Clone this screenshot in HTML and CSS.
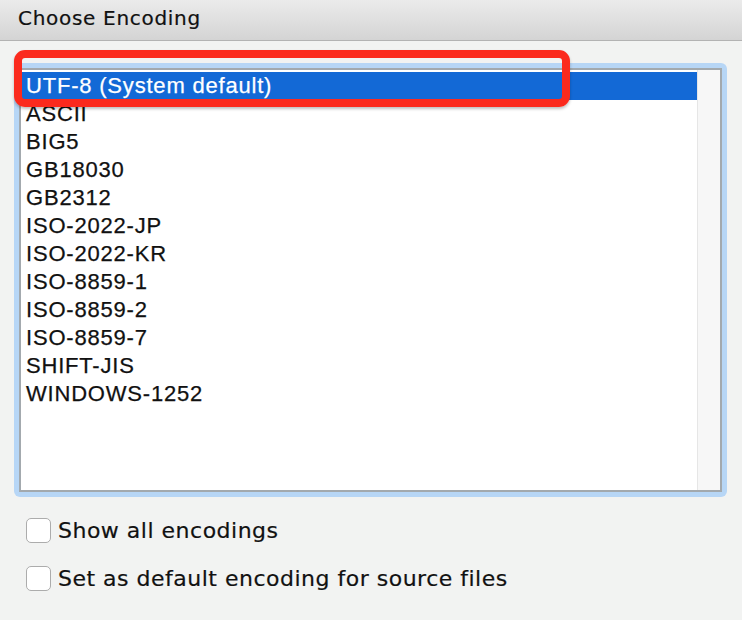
FILE: index.html
```html
<!DOCTYPE html>
<html>
<head>
<meta charset="utf-8">
<link rel="stylesheet" href="styles.css">
</head>
<body>
<div class="window">
  <div class="titlebar">Choose Encoding</div>
  <div class="content">
    <div class="ring">
      <div class="list">
        <div class="items">
          <div class="row selected">UTF-8 (System default)</div>
          <div class="row">ASCII</div>
          <div class="row">BIG5</div>
          <div class="row">GB18030</div>
          <div class="row">GB2312</div>
          <div class="row">ISO-2022-JP</div>
          <div class="row">ISO-2022-KR</div>
          <div class="row">ISO-8859-1</div>
          <div class="row">ISO-8859-2</div>
          <div class="row">ISO-8859-7</div>
          <div class="row">SHIFT-JIS</div>
          <div class="row">WINDOWS-1252</div>
        </div>
        <div class="scrollbar"></div>
      </div>
    </div>
    <div class="options">
      <label class="option"><span class="box"></span><span class="text">Show all encodings</span></label>
      <label class="option"><span class="box"></span><span class="text">Set as default encoding for source files</span></label>
    </div>
  </div>
  <div class="highlight"></div>
</div>
</body>
</html>
```

FILE: styles.css
```css
html, body {
  margin: 0;
  padding: 0;
  background: #ffffff;
}

.window {
  position: relative;
  width: 742px;
  height: 620px;
  background: #f2f3f2;
  display: flex;
  flex-direction: column;
  color: #111;
}

.titlebar {
  box-sizing: border-box;
  height: 41px;
  border-bottom: 1px solid #b3b3b3;
  background: linear-gradient(#ebebeb, #d4d4d4);
  font-family: "DejaVu Sans", sans-serif;
  font-size: 20px;
  letter-spacing: 0.7px;
  line-height: 36px;
  padding-left: 18px;
  color: #111;
  -webkit-text-stroke: 0.2px #111;
}

.content {
  padding: 22px 15px 0 14px;
}

.ring {
  background: #b7d6f6;
  padding: 5px;
  border-radius: 6px;
}

.list {
  height: 424px;
  box-sizing: border-box;
  border: 2px solid #a3a9ae;
  background: #ffffff;
  display: flex;
  padding-top: 2px;
}

.items {
  flex: 1;
  display: flex;
  flex-direction: column;
}

.row {
  height: 28px;
  line-height: 28px;
  padding-left: 5px;
  font-family: "Liberation Sans", Arial, sans-serif;
  font-size: 22px;
  letter-spacing: 0.8px;
  color: #111;
  -webkit-text-stroke: 0.25px currentColor;
}

.row.selected {
  background: #1369d6;
  color: #ffffff;
}

.scrollbar {
  width: 22px;
  border-left: 1px solid #e6e6e6;
  background: #f7f7f7;
  margin-top: -2px;
}

.options {
  margin-top: 21px;
  padding-left: 12px;
  display: flex;
  flex-direction: column;
  gap: 23px;
}

.option {
  display: flex;
  align-items: center;
  height: 25px;
}

.box {
  width: 25px;
  height: 25px;
  box-sizing: border-box;
  border: 1.5px solid #acacac;
  border-radius: 5px;
  background: #ffffff;
  flex: none;
}

.text {
  margin-left: 7px;
  font-family: "DejaVu Sans", sans-serif;
  font-size: 22px;
  letter-spacing: 0.5px;
  color: #111;
  -webkit-text-stroke: 0.2px #111;
}

.highlight {
  position: absolute;
  left: 14px;
  top: 50px;
  width: 556px;
  height: 57px;
  box-sizing: border-box;
  border: 8px solid #fb2a1d;
  border-radius: 11px;
  box-shadow: 0 2px 3px rgba(0, 0, 0, 0.25);
}
```
